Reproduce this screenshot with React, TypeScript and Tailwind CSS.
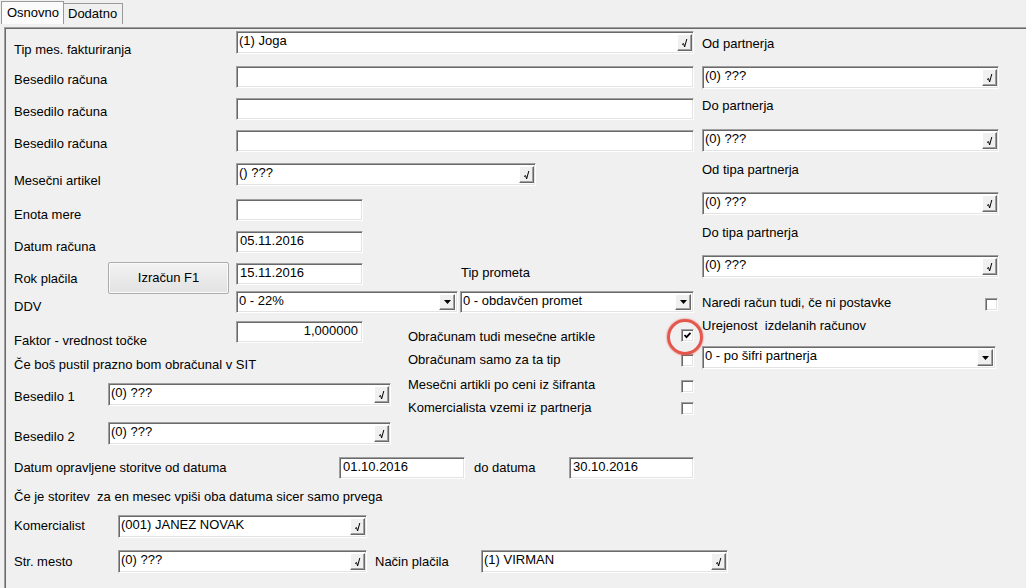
import React from 'react';

// classic sunken edit frame
const sunken =
  'bg-white border border-t-[#a0a0a0] border-l-[#a0a0a0] border-r-white border-b-white shadow-[inset_1px_1px_0_#696969,inset_-1px_-1px_0_#e3e3e3]';

const raised =
  'bg-[#f0f0f0] border border-t-white border-l-white border-r-[#696969] border-b-[#696969] shadow-[inset_-1px_-1px_0_#a0a0a0]';

const Label = ({ children, className = '' }: { children: React.ReactNode; className?: string }) => (
  <span className={`block whitespace-pre leading-[16px] ${className}`}>{children}</span>
);

const Edit = ({ value = '', right = false, className = '' }: { value?: string; right?: boolean; className?: string }) => (
  <div className={`${sunken} h-[22px] px-[3px] pt-[1px] leading-[16px] shrink-0 ${right ? 'text-right pr-[4px]' : ''} ${className}`}>
    {value}
  </div>
);

const Lookup = ({ value = '', className = '' }: { value?: string; className?: string }) => (
  <div className={`${sunken} h-[23px] flex items-stretch py-[2px] pl-[2px] pr-[1px] shrink-0 ${className}`}>
    <span className="flex-1 truncate leading-[16px] -mt-[1px]">{value}</span>
    <span className={`${raised} w-[15px] flex items-center justify-center`}>
      <svg width="7" height="10" viewBox="0 0 7 10">
        <path d="M1 6.5 L2.6 5.6 L3.6 9 L5.8 1" fill="none" stroke="#000" strokeWidth="1" />
      </svg>
    </span>
  </div>
);

const Select = ({ value = '', className = '' }: { value?: string; className?: string }) => (
  <div className={`${sunken} h-[22px] flex items-stretch py-[2px] pl-[2px] pr-[2px] shrink-0 ${className}`}>
    <span className="flex-1 truncate leading-[16px] -mt-[1px]">{value}</span>
    <span className={`${raised} w-[16px] flex items-center justify-center`}>
      <svg width="7" height="4" viewBox="0 0 7 4">
        <path d="M0 0 H7 L3.5 4 Z" fill="#000" />
      </svg>
    </span>
  </div>
);

const Check = ({ checked = false, className = '' }: { checked?: boolean; className?: string }) => (
  <span className={`${sunken} block w-[13px] h-[13px] shrink-0 ${className}`}>
    {checked && (
      <svg width="11" height="11" viewBox="0 0 11 11">
        <path d="M2.5 5 L4.5 7.2 L8.5 2.8" fill="none" stroke="#000" strokeWidth="1.8" />
      </svg>
    )}
  </span>
);

export default function App() {
  return (
    <div className="w-[1026px] h-[588px] overflow-hidden bg-[#f0f0f0] text-[13px] text-black font-['Liberation_Sans',Arial,sans-serif]">
      {/* tab strip */}
      <div className="flex items-end h-[24px] pl-[1px]">
        <div className="h-[23px] w-[63px] border border-b-0 border-[#9a9a9a] bg-[#fbfbfb] pl-[5px] pt-[3px] leading-[16px]">
          Osnovno
        </div>
        <div className="h-[21px] w-[59px] border border-b-0 border-l-0 border-[#9a9a9a] bg-[#f0f0f0] pl-[4px] pt-[2px] leading-[16px]">
          Dodatno
        </div>
      </div>
      <div className="h-[3px]" />

      {/* sheet */}
      <div className="ml-[4px] h-[561px] border-t border-l border-[#a0a0a0] shadow-[inset_1px_1px_0_#696969] pl-[9px]">
        <div className="flex items-start">
          {/* left side */}
          <div className="w-[680px]">
            <div className="flex h-[36px]">
              <Label className="w-[222px] mt-[14px]">Tip mes. fakturiranja</Label>
              <Lookup value="(1) Joga" className="w-[458px] mt-[3px]" />
            </div>
            <div className="flex h-[32px]">
              <Label className="w-[222px] mt-[8px]">Besedilo računa</Label>
              <Edit className="w-[458px] mt-[2px]" />
            </div>
            <div className="flex h-[32px]">
              <Label className="w-[222px] mt-[8px]">Besedilo računa</Label>
              <Edit className="w-[458px] mt-[2px]" />
            </div>
            <div className="flex h-[33px]">
              <Label className="w-[222px] mt-[8px]">Besedilo računa</Label>
              <Edit className="w-[458px] mt-[2px]" />
            </div>
            <div className="flex h-[36px]">
              <Label className="w-[222px] mt-[12px]">Mesečni artikel</Label>
              <Lookup value="() ???" className="w-[300px] mt-[2px]" />
            </div>
            <div className="flex h-[32px]">
              <Label className="w-[222px] mt-[10px]">Enota mere</Label>
              <Edit className="w-[127px] mt-[2px]" />
            </div>
            <div className="flex h-[32px]">
              <Label className="w-[222px] mt-[10px]">Datum računa</Label>
              <Edit value="05.11.2016" className="w-[127px] mt-[2px]" />
            </div>
            <div className="flex h-[29px]">
              <Label className="w-[94px] mt-[10px]">Rok plačila</Label>
              <button className="w-[121px] h-[32px] mt-[1px] shrink-0 border border-[#acacac] rounded-[2px] bg-gradient-to-b from-[#f2f2f2] to-[#e2e2e2] shadow-[inset_0_0_0_1px_#fafafa] leading-[16px]">
                Izračun F1
              </button>
              <div className="w-[7px]" />
              <Edit value="15.11.2016" className="w-[127px] mt-[2px]" />
              <Label className="ml-[98px] mt-[4px]">Tip prometa</Label>
            </div>
            <div className="flex h-[28px]">
              <Label className="w-[222px] mt-[9px]">DDV</Label>
              <Select value="0 - 22%" className="w-[222px] mt-[1px]" />
              <Select value="0 - obdavčen promet" className="w-[234px] mt-[1px] ml-[2px]" />
            </div>

            <div className="flex items-start">
              <div className="w-[394px]">
                <div className="flex h-[32px]">
                  <Label className="w-[222px] mt-[15px]">Faktor - vrednost točke</Label>
                  <Edit value="1,000000" right className="w-[127px] mt-[3px]" />
                </div>
                <div className="h-[30px] pt-[7px]">
                  <Label>Če boš pustil prazno bom obračunal v SIT</Label>
                </div>
                <div className="flex h-[38px]">
                  <Label className="w-[94px] mt-[9px]">Besedilo 1</Label>
                  <Lookup value="(0) ???" className="w-[283px] mt-[3px]" />
                </div>
                <div className="flex h-[32px]">
                  <Label className="w-[94px] mt-[11px]">Besedilo 2</Label>
                  <Lookup value="(0) ???" className="w-[283px] mt-[4px]" />
                </div>
              </div>
              <div className="w-[286px]">
                <div className="flex h-[30px]">
                  <Label className="w-[274px] mt-[11px]">Obračunam tudi mesečne artikle</Label>
                  <span className="relative mt-[11px]">
                    <Check checked />
                    <span className="absolute left-[-14px] top-[-10px] w-[36px] h-[36px] rounded-full border-[3px] border-[#e4574d] shadow-[0_0_2px_#e4574d]" />
                  </span>
                </div>
                <div className="flex h-[25px]">
                  <Label className="w-[274px] mt-[4px]">Obračunam samo za ta tip</Label>
                  <Check className="mt-[6px]" />
                </div>
                <div className="flex h-[24px]">
                  <Label className="w-[274px] mt-[4px]">Mesečni artikli po ceni iz šifranta</Label>
                  <Check className="mt-[7px]" />
                </div>
                <div className="flex h-[24px]">
                  <Label className="w-[274px] mt-[3px]">Komercialista vzemi iz partnerja</Label>
                  <Check className="mt-[5px]" />
                </div>
              </div>
            </div>
          </div>

          {/* right side */}
          <div className="w-[297px] ml-[8px] pt-[8px]">
            <Label>Od partnerja</Label>
            <Lookup value="(0) ???" className="w-[297px] mt-[14px]" />
            <Label className="mt-[9px]">Do partnerja</Label>
            <Lookup value="(0) ???" className="w-[297px] mt-[15px]" />
            <Label className="mt-[10px]">Od tipa partnerja</Label>
            <Lookup value="(0) ???" className="w-[297px] mt-[14px]" />
            <Label className="mt-[10px]">Do tipa partnerja</Label>
            <Lookup value="(0) ???" className="w-[297px] mt-[14px]" />
            <div className="flex justify-between items-start mt-[17px] h-[16px]">
              <Label>Naredi račun tudi, če ni postavke</Label>
              <Check className="mt-[3px] mr-[1px]" />
            </div>
            <Label className="mt-[7px]">Urejenost  izdelanih računov</Label>
            <Select value="0 - po šifri partnerja" className="w-[294px] mt-[12px] h-[23px]" />
          </div>
        </div>

        {/* bottom rows */}
        <div className="flex h-[32px]">
          <Label className="w-[325px] mt-[10px]">Datum opravljene storitve od datuma</Label>
          <Edit value="01.10.2016" className="w-[126px] mt-[7px]" />
          <Label className="w-[95px] ml-[9px] mt-[10px]">do datuma</Label>
          <Edit value="30.10.2016" className="w-[125px] mt-[7px]" />
        </div>
        <div className="h-[23px] pt-[7px]">
          <Label>Če je storitev  za en mesec vpiši oba datuma sicer samo prvega</Label>
        </div>
        <div className="flex h-[33px]">
          <Label className="w-[104px] mt-[13px]">Komercialist</Label>
          <Lookup value="(001) JANEZ NOVAK" className="w-[249px] mt-[10px]" />
        </div>
        <div className="flex h-[40px]">
          <Label className="w-[104px] mt-[16px]">Str. mesto</Label>
          <Lookup value="(0) ???" className="w-[249px] mt-[12px]" />
          <Label className="w-[106px] ml-[8px] mt-[16px]">Način plačila</Label>
          <Lookup value="(1) VIRMAN" className="w-[247px] mt-[12px]" />
        </div>
      </div>
    </div>
  );
}
